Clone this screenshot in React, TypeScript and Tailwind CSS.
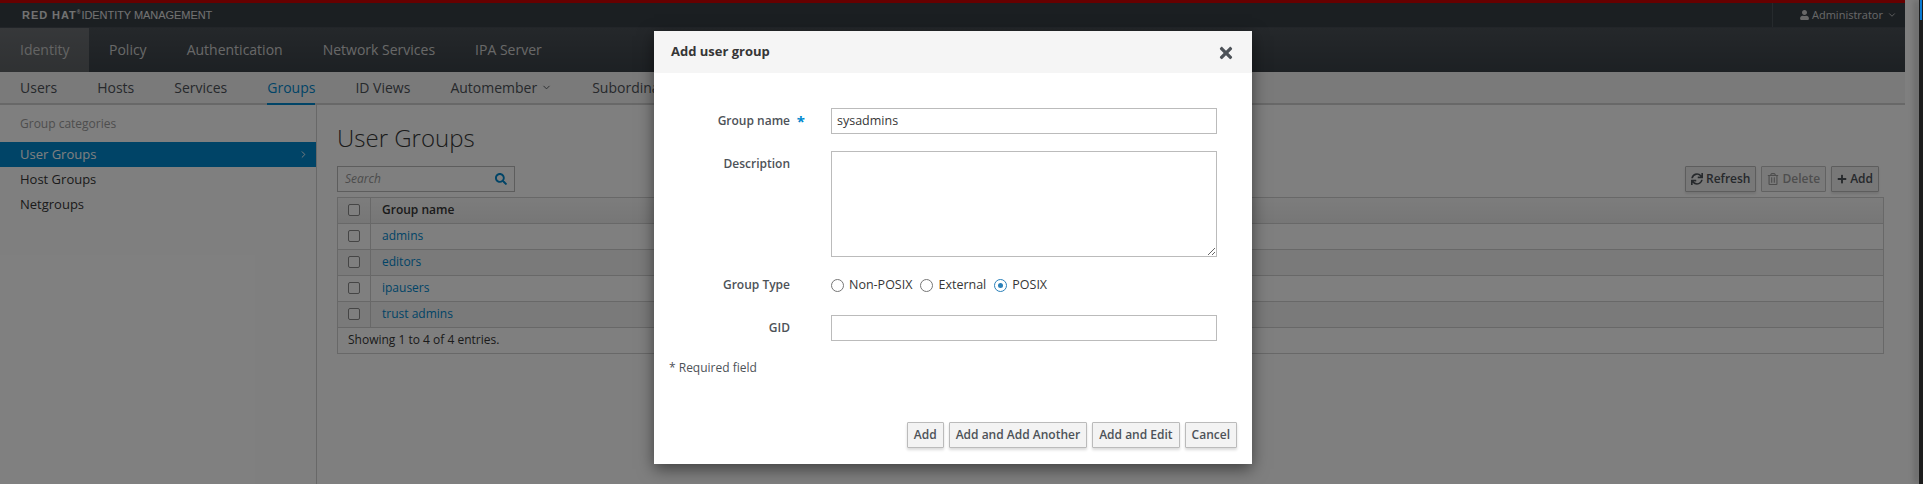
import { ChevronDown, ChevronRight } from 'lucide-react';
import { FaPlus, FaRegTrashAlt, FaSearch, FaSync, FaTimes, FaUser } from 'react-icons/fa';

const primaryTabs = ['Policy', 'Authentication', 'Network Services', 'IPA Server'];
const groups = ['admins', 'editors', 'ipausers', 'trust admins'];
const categories = ['Host Groups', 'Netgroups'];

function Checkbox() {
  return <span className="block w-3 h-3 rounded-[2px] border border-[#8a8a8a] bg-white" />;
}

function Radio({ label, checked = false }: { label: string; checked?: boolean }) {
  return (
    <label className="flex items-center gap-[5px] text-[#363636]">
      <span
        className={`flex items-center justify-center w-[13px] h-[13px] rounded-full border-[1.5px] ${
          checked ? 'border-[#2a80b9]' : 'border-[#767676]'
        }`}
      >
        {checked && <span className="block w-[5px] h-[5px] rounded-full bg-[#2a80b9]" />}
      </span>
      {label}
    </label>
  );
}

function ToolButton({ children, disabled = false }: { children: React.ReactNode; disabled?: boolean }) {
  return (
    <button
      className={`flex items-center gap-[3px] h-[26px] px-[5px] text-[12px] font-semibold border rounded-[1px] ${
        disabled
          ? 'border-[#c4c4c4] text-[#9c9c9c] bg-[#f5f5f5]'
          : 'border-[#bbb] text-[#4d5258] bg-[#f0f0f0] shadow-[0_2px_3px_rgba(3,3,3,0.1)]'
      }`}
    >
      {children}
    </button>
  );
}

function DialogButton({ label }: { label: string }) {
  return (
    <button className="h-[26px] px-[6px] text-[12px] font-semibold text-[#4d5258] bg-[#f3f3f3] border border-[#bbb] rounded-[1px] shadow-[0_2px_3px_rgba(3,3,3,0.15)]">
      {label}
    </button>
  );
}

export default function App() {
  return (
    <div
      className="relative flex h-[484px] overflow-hidden bg-white text-[12px]"
      style={{ fontFamily: '"Open Sans", sans-serif' }}
    >
      <div className="relative w-[1905px] h-full flex flex-col bg-white shrink-0 overflow-hidden">
        {/* Top bar */}
        <div className="h-[3px] bg-[#cc0000] shrink-0" />
        <div className="flex items-center justify-between h-[25px] bg-[#363e45] border-b border-[#444b52] shrink-0">
          <div className="pl-[22px] flex items-center text-[11px] text-[#e4e4e4] leading-none" style={{ fontFamily: '"Liberation Sans", sans-serif' }}>
            <span className="font-bold tracking-[0.95px]">RED HAT</span>
            <span className="text-[5px] font-bold -mt-[5px]">®</span>
            <span className="ml-[1px] tracking-[-0.05px]">IDENTITY MANAGEMENT</span>
          </div>
          <div className="flex items-center gap-[3px] h-full w-[133px] pl-[27px] border-l border-[#4d545b] text-[11px] text-[#d1d1d1]">
            <FaUser className="w-[9px] h-[10px]" />
            <span>Administrator</span>
            <ChevronDown className="w-[10px] h-[10px] ml-[1px]" />
          </div>
        </div>

        {/* Primary nav */}
        <div className="flex h-[44px] bg-gradient-to-b from-[#4a5056] to-[#3a4147] text-[14px] text-[#d1d1d1] shrink-0">
          <div className="flex items-center w-[89px] pl-[20px] pb-px bg-gradient-to-b from-[#6d7074] to-[#5f6366] text-[#c8c8c8]">Identity</div>
          {primaryTabs.map((tab) => (
            <div key={tab} className="flex items-center px-5 pb-px">
              {tab}
            </div>
          ))}
        </div>

        {/* Secondary nav */}
        <div className="flex h-[33px] px-[20px] gap-[40px] bg-[#f5f5f5] border-b-2 border-[#d1d1d1] text-[14px] text-[#4d5258] shrink-0">
          <div className="flex items-center">Users</div>
          <div className="flex items-center">Hosts</div>
          <div className="flex items-center">Services</div>
          <div className="flex items-center h-[33px] text-[#0088ce] border-b-2 border-[#0088ce]">Groups</div>
          <div className="flex items-center">ID Views</div>
          <div className="flex items-center gap-[4px]">
            Automember
            <ChevronDown className="w-[11px] h-[11px]" />
          </div>
          <div className="flex items-center">Subordinate IDs</div>
        </div>

        {/* Content */}
        <div className="flex flex-1 min-h-0">
          <aside className="w-[317px] border-r border-[#d1d1d1] shrink-0">
            <p className="pl-5 pt-[10px] h-[37px] text-[12px] text-[#9c9c9c]">Group categories</p>
            <div className="flex items-center justify-between h-[25px] pl-5 pr-[7px] bg-[#0088ce] text-[13px] text-white">
              User Groups
              <ChevronRight className="w-[11px] h-[11px]" />
            </div>
            {categories.map((name) => (
              <div key={name} className="flex items-center h-[25px] pl-5 text-[13px] text-[#363636]">
                {name}
              </div>
            ))}
          </aside>

          <main className="flex-1 pl-5 pr-[21px]">
            <h1 className="pt-[16px] h-[61px] text-[24px] leading-[33px] font-light text-[#363636]">User Groups</h1>
            <div className="flex items-center justify-between">
              <div className="flex items-center justify-between w-[178px] h-[26px] px-[7px] border border-[#bbb] bg-white">
                <span className="text-[12px] italic text-[#999]">Search</span>
                <FaSearch className="w-3 h-3 text-[#0088ce]" />
              </div>
              <div className="flex gap-[5px] mr-[5px]">
                <ToolButton>
                  <FaSync className="w-3 h-3" />
                  Refresh
                </ToolButton>
                <ToolButton disabled>
                  <FaRegTrashAlt className="w-3 h-3" />
                  Delete
                </ToolButton>
                <ToolButton>
                  <FaPlus className="w-[10px] h-[10px]" />
                  Add
                </ToolButton>
              </div>
            </div>

            <div className="mt-[5px] border border-[#d1d1d1] text-[12px]">
              <div className="flex h-[26px] bg-gradient-to-b from-[#fafafa] to-[#ededed] border-b border-[#d1d1d1]">
                <div className="flex items-center justify-center w-[33px] pb-[2px] border-r border-[#d1d1d1]">
                  <Checkbox />
                </div>
                <div className="flex items-center pl-[11px] pb-[2px] font-semibold text-[#363636]">Group name</div>
              </div>
              {groups.map((name, i) => (
                <div
                  key={name}
                  className={`flex h-[26px] border-b border-[#d1d1d1] ${i % 2 === 1 ? 'bg-[#f5f5f5]' : 'bg-white'}`}
                >
                  <div className="flex items-center justify-center w-[33px] pb-[2px] border-r border-[#d1d1d1]">
                    <Checkbox />
                  </div>
                  <div className="flex items-center pl-[11px] pb-[2px] text-[#0088ce]">{name}</div>
                </div>
              ))}
              <div className="flex items-center h-[25px] pl-[10px] pb-[2px] text-[#363636]">Showing 1 to 4 of 4 entries.</div>
            </div>
          </main>
        </div>
      </div>

      {/* Backdrop */}
      <div className="absolute inset-0 bg-black/50" />

      {/* Window edge with the scroll thumb */}
      <div className="absolute right-0 top-0 bottom-0 w-[4px] bg-[#1c1c1c] shadow-[-4px_0_6px_rgba(0,0,0,0.25)]">
        <div className="h-[20px] w-[2px] ml-px bg-[#0a7ad1]" />
      </div>

      {/* Dialog */}
      <div className="absolute left-[654px] top-[31px] w-[598px] h-[433px] flex flex-col bg-white shadow-[0_5px_15px_rgba(0,0,0,0.5)] text-[12px] text-[#363636]">
        <div className="flex items-center justify-between h-[42px] pl-[17px] pr-[17px] bg-[#f5f5f5] shrink-0">
          <h2 className="font-bold text-[13px]">Add user group</h2>
          <FaTimes className="w-[18px] h-[18px] text-[#4d5258] mt-[2px]" />
        </div>
        <div className="flex-1 flex flex-col pt-[35px]">
          <div className="grid grid-cols-[136px_386px] gap-x-[41px] items-start">
            <div className="relative h-[26px] flex items-center justify-end font-semibold text-[#4d5258]">
              Group name
              <span className="absolute right-[-15px] text-[#0088ce] text-[15px] font-bold">*</span>
            </div>
            <input
              readOnly
              value="sysadmins"
              className="h-[26px] px-[5px] pb-[2px] border border-[#bbb] text-[12.5px] text-[#363636] outline-none"
            />
            <div className="mt-[17px] h-[26px] flex items-center justify-end font-semibold text-[#4d5258]">Description</div>
            <textarea readOnly className="mt-[17px] h-[106px] border border-[#bbb] outline-none block" />
            <div className="mt-[15px] h-[26px] flex items-center justify-end font-semibold text-[#4d5258]">Group Type</div>
            <div className="mt-[15px] h-[26px] flex items-center gap-[8px] text-[12.5px]">
              <Radio label="Non-POSIX" />
              <Radio label="External" />
              <Radio label="POSIX" checked />
            </div>
            <div className="mt-[17px] h-[26px] flex items-center justify-end font-semibold text-[#4d5258]">GID</div>
            <input readOnly className="mt-[17px] h-[26px] border border-[#bbb] outline-none" />
          </div>
          <p className="mt-[18px] pl-[15px] text-[#4d5258]">* Required field</p>
        </div>
        <div className="flex justify-end gap-[5px] pr-[15px] pb-[16px]">
          <DialogButton label="Add" />
          <DialogButton label="Add and Add Another" />
          <DialogButton label="Add and Edit" />
          <DialogButton label="Cancel" />
        </div>
      </div>
    </div>
  );
}
